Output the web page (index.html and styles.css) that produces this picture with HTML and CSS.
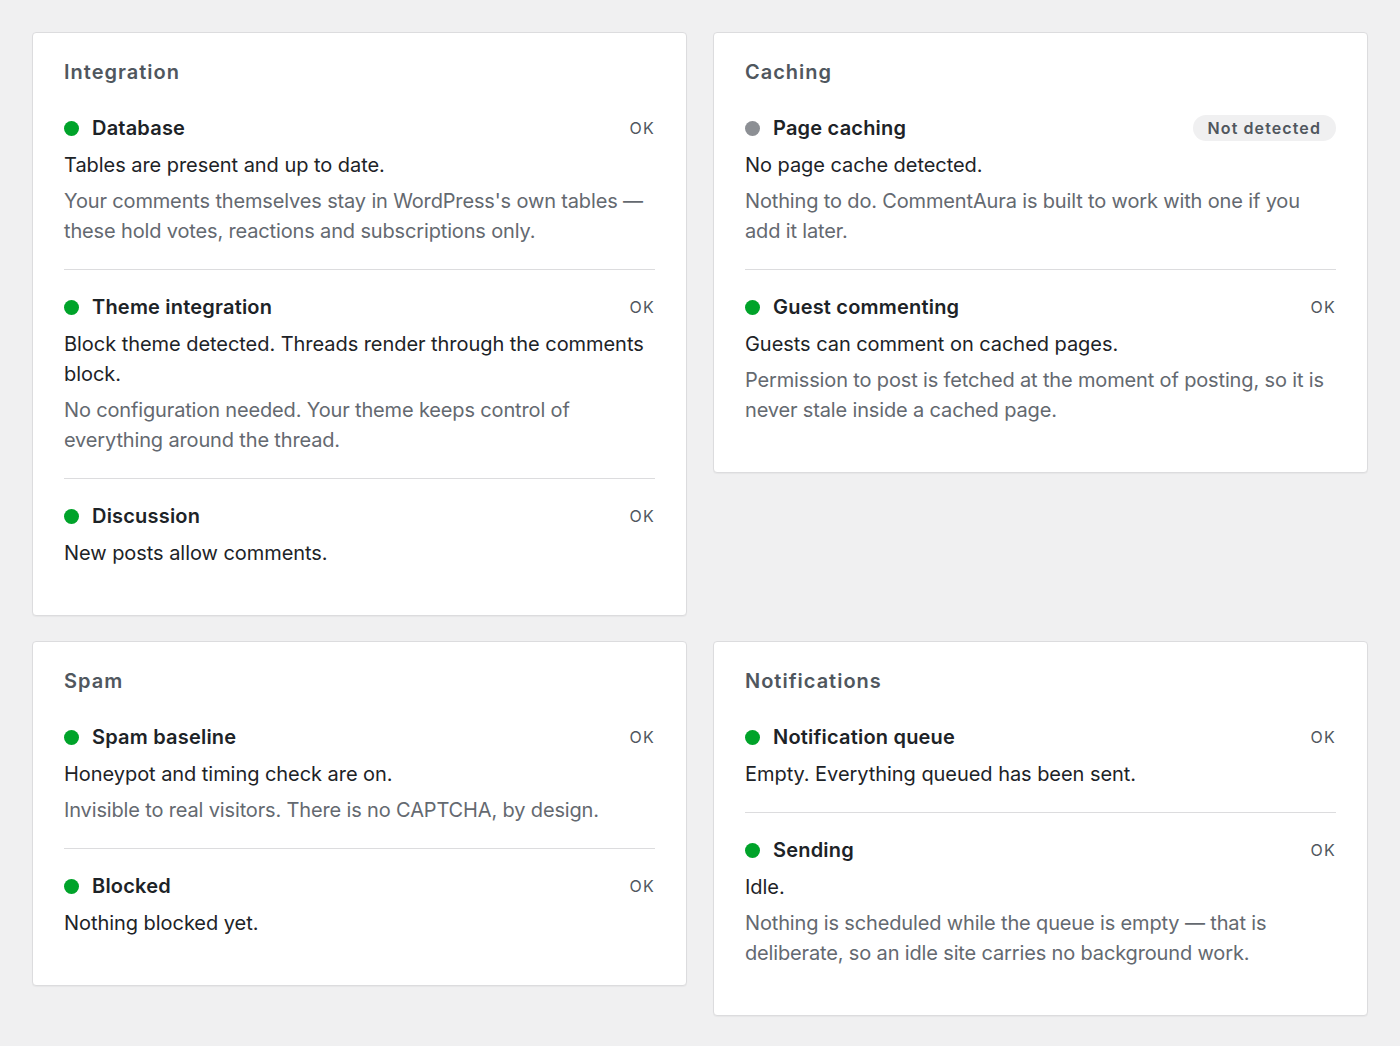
FILE: index.html
```html
<!DOCTYPE html>
<html lang="en">
<head>
    <meta charset="UTF-8">
    <meta name="viewport" content="width=device-width, initial-scale=1.0">
    <title>CommentAura — Status</title>
    <link rel="stylesheet" href="styles.css">
</head>
<body>
    <main class="status-grid">
        <section class="card">
            <h2 class="card-title">Integration</h2>
            <div class="check">
                <div class="check-head">
                    <span class="dot ok"></span>
                    <h3 class="check-name">Database</h3>
                    <span class="check-state">OK</span>
                </div>
                <p class="check-desc">Tables are present and up to date.</p>
                <p class="check-note">Your comments themselves stay in WordPress's own tables — these hold votes, reactions and subscriptions only.</p>
            </div>
            <div class="check">
                <div class="check-head">
                    <span class="dot ok"></span>
                    <h3 class="check-name">Theme integration</h3>
                    <span class="check-state">OK</span>
                </div>
                <p class="check-desc">Block theme detected. Threads render through the comments block.</p>
                <p class="check-note">No configuration needed. Your theme keeps control of everything around the thread.</p>
            </div>
            <div class="check">
                <div class="check-head">
                    <span class="dot ok"></span>
                    <h3 class="check-name">Discussion</h3>
                    <span class="check-state">OK</span>
                </div>
                <p class="check-desc">New posts allow comments.</p>
            </div>
        </section>

        <section class="card">
            <h2 class="card-title">Caching</h2>
            <div class="check">
                <div class="check-head">
                    <span class="dot off"></span>
                    <h3 class="check-name">Page caching</h3>
                    <span class="badge">Not detected</span>
                </div>
                <p class="check-desc">No page cache detected.</p>
                <p class="check-note">Nothing to do. CommentAura is built to work with one if you add it later.</p>
            </div>
            <div class="check">
                <div class="check-head">
                    <span class="dot ok"></span>
                    <h3 class="check-name">Guest commenting</h3>
                    <span class="check-state">OK</span>
                </div>
                <p class="check-desc">Guests can comment on cached pages.</p>
                <p class="check-note">Permission to post is fetched at the moment of posting, so it is never stale inside a cached page.</p>
            </div>
        </section>

        <section class="card">
            <h2 class="card-title">Spam</h2>
            <div class="check">
                <div class="check-head">
                    <span class="dot ok"></span>
                    <h3 class="check-name">Spam baseline</h3>
                    <span class="check-state">OK</span>
                </div>
                <p class="check-desc">Honeypot and timing check are on.</p>
                <p class="check-note">Invisible to real visitors. There is no CAPTCHA, by design.</p>
            </div>
            <div class="check">
                <div class="check-head">
                    <span class="dot ok"></span>
                    <h3 class="check-name">Blocked</h3>
                    <span class="check-state">OK</span>
                </div>
                <p class="check-desc">Nothing blocked yet.</p>
            </div>
        </section>

        <section class="card">
            <h2 class="card-title">Notifications</h2>
            <div class="check">
                <div class="check-head">
                    <span class="dot ok"></span>
                    <h3 class="check-name">Notification queue</h3>
                    <span class="check-state">OK</span>
                </div>
                <p class="check-desc">Empty. Everything queued has been sent.</p>
            </div>
            <div class="check">
                <div class="check-head">
                    <span class="dot ok"></span>
                    <h3 class="check-name">Sending</h3>
                    <span class="check-state">OK</span>
                </div>
                <p class="check-desc">Idle.</p>
                <p class="check-note">Nothing is scheduled while the queue is empty — that is deliberate, so an idle site carries no background work.</p>
            </div>
        </section>
    </main>
</body>
</html>
```

FILE: styles.css
```css
body {
    margin: 0;
    padding: 0;
    background-color: #f0f0f1;
    color: #1d2327;
    font-family: Inter, "Noto Sans", "Liberation Sans", sans-serif;
}
.status-grid {
    display: grid;
    grid-template-columns: 1fr 1fr;
    column-gap: 26px;
    row-gap: 25px;
    align-items: start;
    padding: 32px;
}
.card {
    background: #fff;
    border: 1px solid #dcdcde;
    border-radius: 4px;
    box-shadow: 0 1px 1px rgba(0, 0, 0, 0.04);
    padding: 25px 31px 24px;
}
.card-title {
    margin: 0;
    font-size: 20px;
    line-height: 28px;
    font-weight: 600;
    letter-spacing: 1px;
    color: #50575e;
}
.check {
    padding: 23px 0;
}
.check + .check {
    border-top: 1px solid #dcdcde;
}
.check:first-of-type {
    padding-top: 28px;
}
.check-head {
    display: flex;
    align-items: center;
    height: 28px;
}
.dot {
    width: 15px;
    height: 15px;
    border-radius: 50%;
    margin-right: 13px;
    flex-shrink: 0;
}
.dot.ok {
    background: #00a32a;
}
.dot.off {
    background: #8c8f94;
}
.check-name {
    margin: 0;
    flex: 1;
    font-size: 20px;
    font-weight: 600;
    letter-spacing: 0.2px;
    line-height: 28px;
    color: #1d2327;
}
.check-state {
    font-size: 16px;
    letter-spacing: 1.2px;
    color: #50575e;
}
.badge {
    background: #f0f0f1;
    border-radius: 13px;
    padding: 0 15px;
    height: 26px;
    line-height: 26px;
    font-size: 16px;
    font-weight: 600;
    letter-spacing: 1.1px;
    color: #50575e;
}
.check-desc {
    margin: 8px 0 0;
    font-size: 20px;
    line-height: 30px;
    letter-spacing: -0.05px;
    color: #1d2327;
}
.check-note {
    margin: 6px 0 0;
    font-size: 20px;
    line-height: 30px;
    letter-spacing: -0.15px;
    color: #646970;
}
```
